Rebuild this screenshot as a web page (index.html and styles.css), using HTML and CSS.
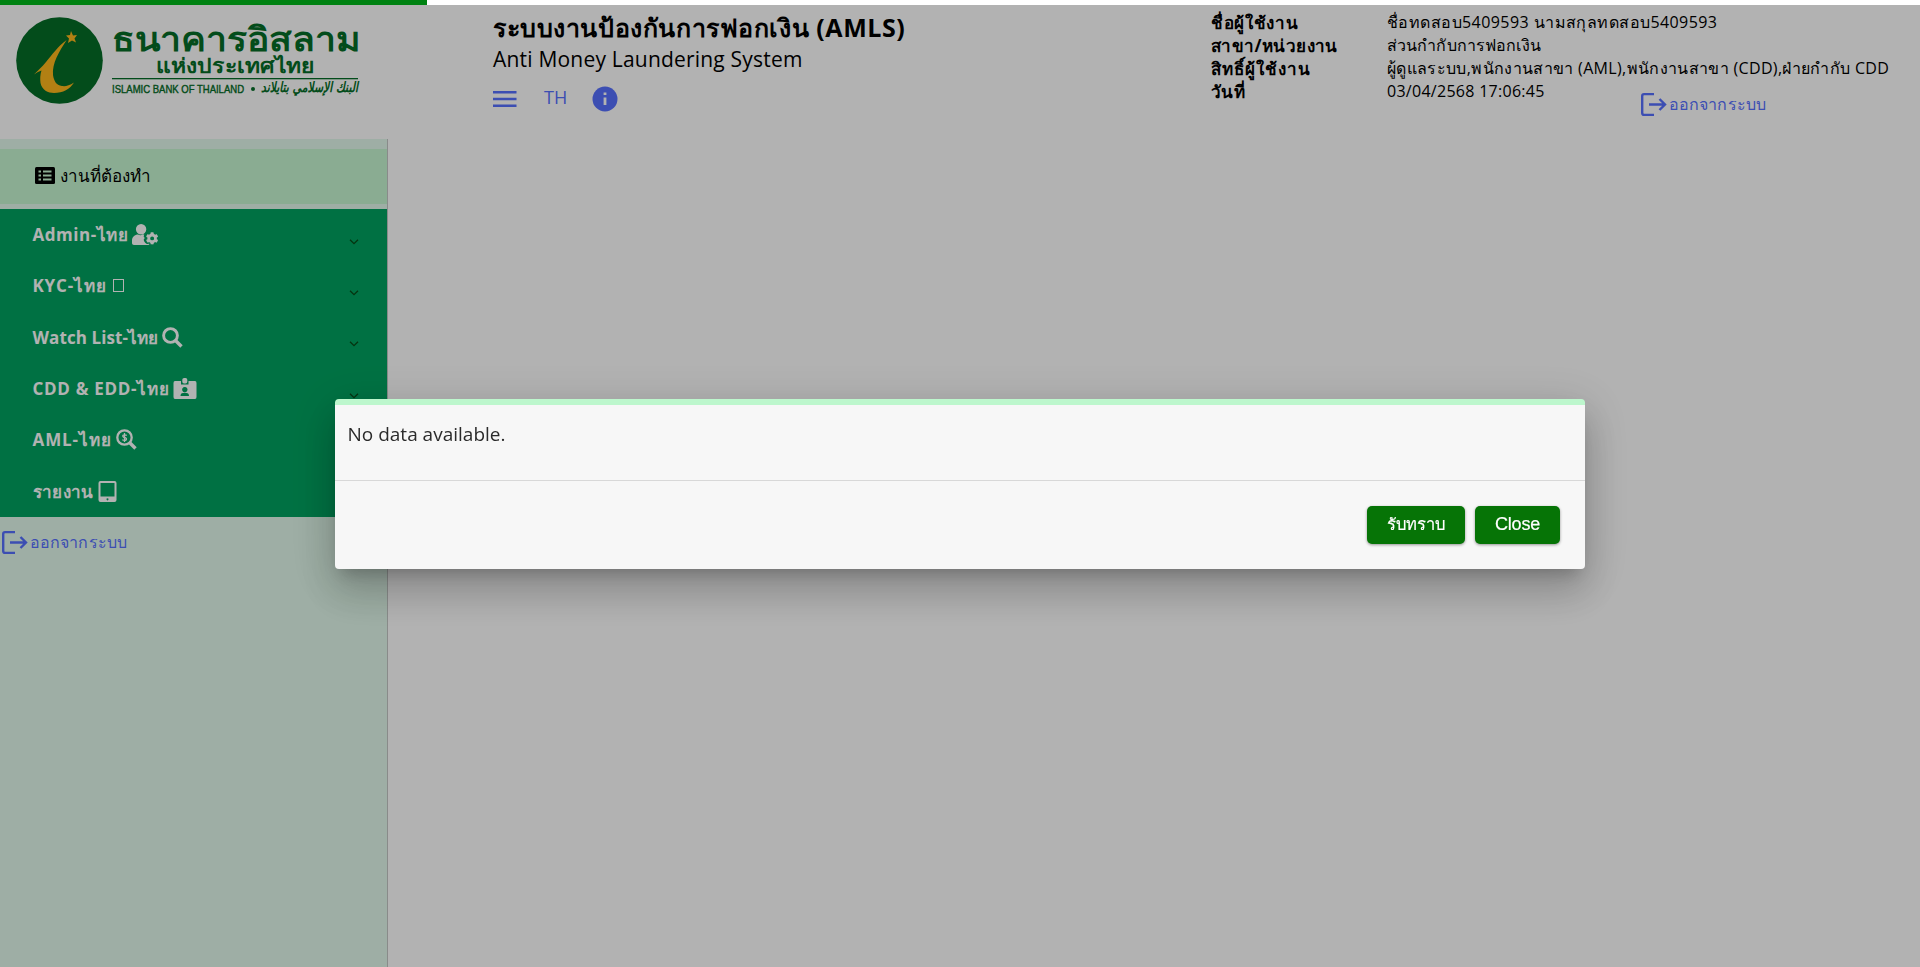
FILE: index.html
```html
<!DOCTYPE html>
<html lang="th">
<head>
<meta charset="utf-8">
<title>AMLS</title>
<link rel="stylesheet" href="styles.css">
</head>
<body>
<div class="progress"><div class="progress-value"></div></div>
<div class="app">
  <header class="header">
    <div class="brand">
      <svg class="logo" width="370" height="112" viewBox="0 -12 370 112">
        <circle cx="43.500" cy="43.500" r="43.300" fill="#056d27"/>
        <path d="M50.600 23C42 29 36 38 30 45C26 50 22 53 18 57.600Q22 54.500 25.500 53.500C24 58 24 62 24.500 66C26 73 32 76 38 76C47 76 54 72 58 65.500C53 69 49 69.500 46 69C40 68 38 64 37 58C36 46 43 35 50.600 23Z" fill="#ffb81c"/>
        <path d="M55 14L57 18.500L61 18L58.500 21.500L60 25.500L56 23.500L52 26L53 21.500L50 18.500L54 18Z" fill="#ffb81c"/>
        <g fill="#056d27" font-family="Noto Sans, sans-serif">
          <text x="96" y="34" font-size="34" font-weight="700" textLength="248" lengthAdjust="spacingAndGlyphs">ธนาคารอิสลาม</text>
          <text x="140" y="56" font-size="20" font-weight="700" textLength="159" lengthAdjust="spacingAndGlyphs">แห่งประเทศไทย</text>
          <rect x="96" y="61" width="246" height="1.300"/>
          <text class="logo-latin" x="96" y="75.500" font-size="11" textLength="132" lengthAdjust="spacingAndGlyphs">ISLAMIC BANK OF THAILAND</text>
          <circle cx="237" cy="72" r="2"/>
          <text class="logo-arabic" x="245" y="75" font-size="14" textLength="97" lengthAdjust="spacingAndGlyphs" direction="ltr">البنك الإسلامي بتايلاند</text>
        </g>
      </svg>
    </div>
    <div class="heading">
      <div class="title">ระบบงานป้องกันการฟอกเงิน (AMLS)</div>
      <div class="subtitle">Anti Money Laundering System</div>
      <div class="tools">
        <svg width="24" height="16" viewBox="0 0 24 16"><path d="M0 1.200H23.500M0 8H23.500M0 14.800H23.500" stroke="currentColor" stroke-width="2.400"/></svg>
        <span class="lang">TH</span>
        <svg width="26" height="26" viewBox="0 0 26 26"><circle cx="13" cy="13" r="12.500" fill="currentColor"/><path d="M11.600 6.500h2.800v2.600h-2.800zM11.600 11.500h2.800v7.500h-2.800z" fill="#fff"/></svg>
      </div>
    </div>
    <div class="user">
      <div class="label l1">ชื่อผู้ใช้งาน</div><div class="v1">ชื่อทดสอบ5409593 นามสกุลทดสอบ5409593</div>
      <div class="label l2">สาขา/หน่วยงาน</div><div class="v2">ส่วนกำกับการฟอกเงิน</div>
      <div class="label l3">สิทธิ์ผู้ใช้งาน</div><div class="v3">ผู้ดูแลระบบ,พนักงานสาขา (AML),พนักงานสาขา (CDD),ฝ่ายกำกับ CDD</div>
      <div class="label l4">วันที่</div><div class="v4">03/04/2568 17:06:45</div>
      <a class="logout header-logout"><svg width="26" height="23" viewBox="0 0 26 23"><path d="M13 1.100H3Q1.200 1.100 1.200 3V20Q1.200 21.900 3 21.900H13M8 11.500H24M18.500 6L24 11.500L18.500 17" fill="none" stroke="currentColor" stroke-width="2.400"/></svg><span>ออกจากระบบ</span></a>
    </div>
  </header>
  <aside class="sidebar">
    <div class="todo">
      <svg width="20" height="17" viewBox="0 0 20 17"><rect width="20" height="17" rx="1.500"/><path d="M3.500 4.500h2.500M8 4.500h8.500M3.500 8.500h2.500M8 8.500h8.500M3.500 12.500h2.500M8 12.500h8.500" stroke="#c6f6d2" stroke-width="2"/></svg>
      <span>งานที่ต้องทำ</span>
    </div>
    <nav class="menu">
      <div class="item"><span class="m1">Admin-ไทย</span>
        <svg width="26" height="21" viewBox="0 0 640 512"><path fill="currentColor" d="M224 256A128 128 0 1 0 224 0a128 128 0 1 0 0 256zM425 482c-3-1-5-3-8-4l-8 4c-25 14-57 10-84-22-14-17-25-35-32-55-9-24 1-45 19-57v-9c-25-15-28-40-17-64l7-15-6-4h-29c-46 21-75 21-120 0h-17C60 268 0 328 0 402v62c0 27 21 48 48 48h352c10 0 18-2 25-7z"/><path fill="currentColor" fill-rule="evenodd" d="M610 373a118 118 0 0 0 0-43l26-15c3-2 4-5 3-9-7-21-18-41-33-57-2-3-6-3-9-2l-26 15c-11-9-23-17-37-22v-29c0-4-2-7-6-7-22-5-45-5-66 0-4 0-6 3-6 7v29c-14 5-26 13-37 22l-26-15c-3-1-7-1-9 2-15 16-26 36-33 57-1 4 0 7 3 9l26 15a118 118 0 0 0 0 43l-26 15c-3 2-4 5-3 9 7 21 18 41 33 57 2 3 6 3 9 2l26-15c11 9 23 17 37 22v29c0 4 2 7 6 7 22 5 45 5 66 0 4 0 6-3 6-7v-29c14-5 26-13 37-22l26 15c3 1 7 1 9-2 15-16 26-36 33-57 1-4 0-7-3-9zM496 400a48 48 0 1 1 0-97 48 48 0 0 1 0 97z"/></svg>
        <svg class="chev" width="10" height="6" viewBox="0 0 10 6"><path d="M1 .7L5 4.700L9 .7" fill="none" stroke="#084a18" stroke-width="1.300"/></svg></div>
      <div class="item"><span class="m2">KYC-ไทย</span>
        <svg class="missing" width="11" height="13" viewBox="0 0 11 13"><rect x=".5" y=".5" width="10" height="12" fill="none" stroke="currentColor"/></svg>
        <svg class="chev" width="10" height="6" viewBox="0 0 10 6"><path d="M1 .7L5 4.700L9 .7" fill="none" stroke="#084a18" stroke-width="1.300"/></svg></div>
      <div class="item"><span class="m3">Watch List-ไทย</span>
        <svg width="21" height="21" viewBox="0 0 21 21"><circle cx="8.500" cy="8.500" r="6.900" fill="none" stroke="currentColor" stroke-width="2.900"/><path d="M13.500 13.500L19.500 19.500" stroke="currentColor" stroke-width="3.300"/></svg>
        <svg class="chev" width="10" height="6" viewBox="0 0 10 6"><path d="M1 .7L5 4.700L9 .7" fill="none" stroke="#084a18" stroke-width="1.300"/></svg></div>
      <div class="item"><span class="m4">CDD &amp; EDD-ไทย</span>
        <svg width="24" height="21" viewBox="0 0 24 21"><path fill="currentColor" fill-rule="evenodd" d="M2 3H8V6.500H15.500V3H22Q23.500 3 23.500 5V19Q23.500 21 22 21H2Q.5 21 .5 19V5Q.5 3 2 3ZM11.800 9a2.700 2.700 0 1 0 .01 0ZM7.500 18H16Q16 15 13.500 15H10Q7.500 15 7.500 18Z"/><rect x="9.300" y="0" width="5" height="5.500" rx="1.800" fill="currentColor"/></svg>
        <svg class="chev" width="10" height="6" viewBox="0 0 10 6"><path d="M1 .7L5 4.700L9 .7" fill="none" stroke="#084a18" stroke-width="1.300"/></svg></div>
      <div class="item"><span class="m5">AML-ไทย</span>
        <svg width="21" height="21" viewBox="0 0 21 21"><circle cx="8.500" cy="8.500" r="7.200" fill="none" stroke="currentColor" stroke-width="2.300"/><path d="M13.500 13.500L19.500 19.500" stroke="currentColor" stroke-width="3.300"/><path d="M10.800 6.300Q8.500 5.300 7 6.300Q6.200 8 8.500 8.500Q11.200 9.200 10.200 10.900Q8.500 12 6.300 10.800M8.500 4V13" fill="none" stroke="currentColor" stroke-width="1.300"/></svg></div>
      <div class="item"><span class="m6">รายงาน</span>
        <svg width="19" height="21" viewBox="0 0 19 21"><path fill="currentColor" fill-rule="evenodd" d="M2.500 0H16.500Q18.500 0 18.500 2V19Q18.500 21 16.500 21H2.500Q.5 21 .5 19V2Q.5 0 2.500 0ZM2.500 2V15.500H16.500V2ZM9.500 17.200a1 1 0 1 0 .01 0Z"/></svg></div>
    </nav>
    <a class="logout side-logout"><svg width="26" height="23" viewBox="0 0 26 23"><path d="M13 1.100H3Q1.200 1.100 1.200 3V20Q1.200 21.900 3 21.900H13M8 11.500H24M18.500 6L24 11.500L18.500 17" fill="none" stroke="currentColor" stroke-width="2.400"/></svg><span>ออกจากระบบ</span></a>
  </aside>
</div>
<div class="backdrop">
  <div class="dialog">
    <div class="dialog-body"><span>No data available.</span></div>
    <div class="dialog-actions">
      <button class="btn ack"><span>รับทราบ</span></button>
      <button class="btn close"><span>Close</span></button>
    </div>
  </div>
</div>
</body>
</html>
```
FILE: styles.css
```css
* { box-sizing: border-box; }
html, body { height: 100%; }
body { margin: 0; overflow: hidden; background: #fff; color: #000; font-family: "Open Sans", "Noto Sans", sans-serif; display: flex; flex-direction: column; }
span, .title, .subtitle, .user > div { white-space: nowrap; }
svg { flex: none; display: block; overflow: visible; }
.progress { position: relative; z-index: 3; flex: none; height: 5px; background: #fff; }
.progress-value { width: 427px; height: 5px; background: #008212; }
.app { flex: 1; display: flex; flex-direction: column; min-height: 0; }
.header { height: 134px; flex: none; display: flex; }
.brand { width: 493px; padding: 0 0 0 16px; flex: none; }
.logo-latin { font-family: "Liberation Sans", sans-serif; stroke: #056d27; stroke-width: .4px; }
.logo-arabic { font-family: "DejaVu Sans", sans-serif; font-style: italic; font-weight: 700; }
.heading { width: 718px; flex: none; padding-top: 5px; }
.title { font-size: 25px; line-height: 35px; font-weight: 700; letter-spacing: .58px; }
.subtitle { font-size: 21px; line-height: 28px; letter-spacing: .2px; }
.tools { display: flex; align-items: center; margin-top: 12px; height: 27px; color: #5770ff; }
.lang { font-size: 18px; margin: -3px 25px 0 27px; }
.user { display: grid; grid-template-columns: 176px 1fr; grid-template-rows: repeat(4, 23px) 26px; padding-top: 6px; font-size: 16px; line-height: 23px; align-content: start; flex: 1; }
.label { font-weight: 700; font-size: 17px; }
.l1 { letter-spacing: .7px; }
.l2 { letter-spacing: .4px; }
.l3 { letter-spacing: 1px; }
.l4 { letter-spacing: .3px; }
.v1 { letter-spacing: .43px; }
.v2 { letter-spacing: .12px; }
.v3 { letter-spacing: .34px; }
.v4 { letter-spacing: .28px; }
.logout { display: flex; align-items: center; gap: 2px; color: #5770ff; font-size: 16px; line-height: 23px; }
.logout span { letter-spacing: .1px; }
.header-logout { grid-column: 2; align-self: start; margin: -10px 0 0 254px; }
.sidebar { width: 388px; flex: 1; background: #e2faec; border-right: 1px solid #c4c8c6; padding-top: 10px; }
.todo { height: 55px; background: #c6f6d2; display: flex; align-items: center; gap: 5px; padding: 0 0 2px 34.5px; font-size: 17px; }
.menu { margin-top: 5px; height: 308px; background: #00a360; color: #fff; display: grid; grid-template-rows: repeat(6, 1fr); }
.item { display: flex; align-items: center; gap: 4px; padding: 0 28px 0 32.5px; font-size: 17px; font-weight: 700; }
.m1 { letter-spacing: .55px; }
.m2 { letter-spacing: .8px; }
.m3 { letter-spacing: .1px; }
.m4 { letter-spacing: .7px; }
.m5 { letter-spacing: .9px; }
.m6 { letter-spacing: .4px; }
.missing { margin-left: 3px; }
.chev { margin: 14px 0 0 auto; }
.side-logout { margin-top: 14px; padding-left: 2px; }
.backdrop { position: fixed; inset: 0; z-index: 2; background: rgba(0, 0, 0, .3); display: flex; align-items: center; justify-content: center; }
.dialog { width: 1250px; height: 170px; border-radius: 4px; border-top: 6px solid #bdf7cd; background: #f7f7f7; color: #2b2b2b; box-shadow: 0 11px 15px -7px rgba(0,0,0,.2), 0 24px 38px 3px rgba(0,0,0,.14), 0 9px 46px 8px rgba(0,0,0,.12); }
.dialog-body { height: 75px; padding: 15px 12.5px; font-size: 19px; line-height: 29px; }
.dialog-actions { height: 89px; border-top: 1px solid #d8d8d8; display: flex; justify-content: flex-end; gap: 10px; padding: 25px 25px 0; }
.btn { height: 38px; border: 0; padding: 0 0 2px; border-radius: 5px; background: #067406; color: #fff; font: 18px/36px "Liberation Sans", "Noto Sans", sans-serif; -webkit-text-stroke: .2px #fff; box-shadow: 0 1px 3px rgba(0,0,0,.4); }
.ack { width: 98px; font-size: 16.5px; }
.close { width: 85px; letter-spacing: -.2px; }
```
